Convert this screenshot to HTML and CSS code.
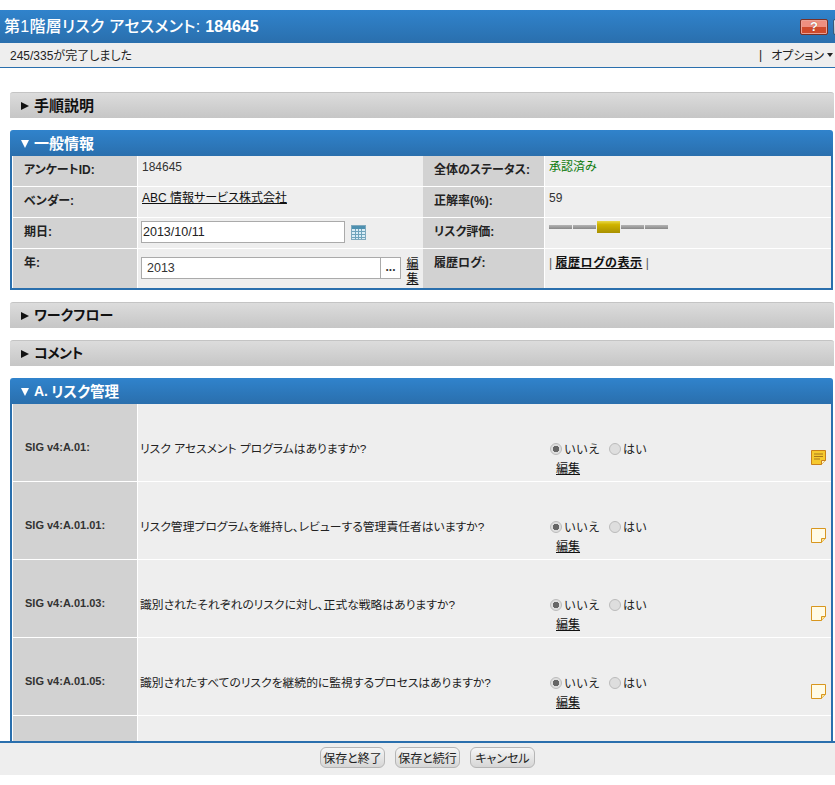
FILE: index.html
```html
<!DOCTYPE html>
<html lang="ja">
<head>
<meta charset="utf-8">
<title>第1階層リスク アセスメント</title>
<link rel="stylesheet" href="styles.css">
</head>
<body>
<div class="page">
  <header class="title-bar">
    <h1 class="title">第1階層リスク アセスメント: <b>184645</b></h1>
    <div class="title-tools">
      <button class="help" aria-label="ヘルプ">?</button>
      <span class="tool-next"></span>
    </div>
  </header>
  <div class="status-bar">
    <span>245/335が完了しました</span>
    <span class="options"><span class="sep">|</span>オプション<span class="caret"></span></span>
  </div>
  <main class="content">
    <section class="panel"><h2 class="head grey"><span class="tri-right"></span>手順説明</h2></section>
    <section class="panel">
      <h2 class="head blue"><span class="tri-down"></span>一般情報</h2>
      <div class="info">
        <div class="label">アンケートID:</div>
        <div class="value">184645</div>
        <div class="label">全体のステータス:</div>
        <div class="value green">承認済み</div>

        <div class="label">ベンダー:</div>
        <div class="value"><a href="#">ABC 情報サービス株式会社</a></div>
        <div class="label">正解率(%):</div>
        <div class="value">59</div>

        <div class="label">期日:</div>
        <div class="value date-cell">
          <input class="text date" value="2013/10/11">
          <svg class="cal" width="15" height="15" viewBox="0 0 15 15"><rect x="0.500" y="0.500" width="14" height="14" fill="#d9ecf5" stroke="#7fa9bd"/><rect x="1" y="1" width="13" height="3" fill="#4d90b0"/><path d="M1 6.500h13M1 9.500h13M1 12.500h13M4.500 4v10M7.500 4v10M10.500 4v10" stroke="#6ea3bb" stroke-width="1" fill="none"/></svg>
        </div>
        <div class="label">リスク評価:</div>
        <div class="value meter-cell">
          <div class="meter">
            <span class="seg"></span><span class="seg"></span><span class="seg on"></span><span class="seg"></span><span class="seg"></span>
          </div>
        </div>

        <div class="label last">年:</div>
        <div class="value year-cell last">
          <div class="year-box"><span class="year-val">2013</span><span class="year-btn">...</span></div>
          <a class="edit-v" href="#">編集</a>
        </div>
        <div class="label last">履歴ログ:</div>
        <div class="value last log"><span class="pipe">|</span> <a href="#">履歴ログの表示</a> <span class="pipe">|</span></div>
      </div>
    </section>
    <section class="panel"><h2 class="head grey"><span class="tri-right"></span><span class="kana">ワークフロー</span></h2></section>
    <section class="panel"><h2 class="head grey"><span class="tri-right"></span><span class="kana tight">コメント</span></h2></section>
    <section class="panel">
      <h2 class="head blue"><span class="tri-down"></span><b class="latin">A.</b><span class="kana-mix">リスク管理</span></h2>
      <div class="q-list">
        <div class="q">
          <div class="q-id">SIG v4:A.01:</div>
          <div class="q-text">リスク アセスメント プログラムはありますか?</div>
          <div class="q-ans">
            <div class="radios"><span class="radio on"></span><span class="opt">いいえ</span><span class="radio"></span><span class="opt">はい</span></div>
            <a href="#">編集</a>
          </div>
          <svg class="note" width="15" height="15" viewBox="0 0 15 15"><path d="M0.500 0.500H14.500V10.500L10.500 14.500H0.500Z" fill="#f6c92e" stroke="#c9801a"/><path d="M3 4h9M3 6.500h9M3 9h6" stroke="#a8761c"/><path d="M10.500 14.500V10.500H14.500" fill="#fff3c0" stroke="#c9801a"/></svg>
        </div>
        <div class="q">
          <div class="q-id">SIG v4:A.01.01:</div>
          <div class="q-text">リスク管理プログラムを維持し、レビューする管理責任者はいますか?</div>
          <div class="q-ans">
            <div class="radios"><span class="radio on"></span><span class="opt">いいえ</span><span class="radio"></span><span class="opt">はい</span></div>
            <a href="#">編集</a>
          </div>
          <svg class="note" width="15" height="15" viewBox="0 0 15 15"><path d="M0.500 0.500H14.500V10.500L10.500 14.500H0.500Z" fill="#fffbe6" stroke="#d8961e"/><path d="M10.500 14.500V10.500H14.500" fill="#f8e49a" stroke="#d8961e"/></svg>
        </div>
        <div class="q">
          <div class="q-id">SIG v4:A.01.03:</div>
          <div class="q-text">識別されたそれぞれのリスクに対し、正式な戦略はありますか?</div>
          <div class="q-ans">
            <div class="radios"><span class="radio on"></span><span class="opt">いいえ</span><span class="radio"></span><span class="opt">はい</span></div>
            <a href="#">編集</a>
          </div>
          <svg class="note" width="15" height="15" viewBox="0 0 15 15"><path d="M0.500 0.500H14.500V10.500L10.500 14.500H0.500Z" fill="#fffbe6" stroke="#d8961e"/><path d="M10.500 14.500V10.500H14.500" fill="#f8e49a" stroke="#d8961e"/></svg>
        </div>
        <div class="q">
          <div class="q-id">SIG v4:A.01.05:</div>
          <div class="q-text">識別されたすべてのリスクを継続的に監視するプロセスはありますか?</div>
          <div class="q-ans">
            <div class="radios"><span class="radio on"></span><span class="opt">いいえ</span><span class="radio"></span><span class="opt">はい</span></div>
            <a href="#">編集</a>
          </div>
          <svg class="note" width="15" height="15" viewBox="0 0 15 15"><path d="M0.500 0.500H14.500V10.500L10.500 14.500H0.500Z" fill="#fffbe6" stroke="#d8961e"/><path d="M10.500 14.500V10.500H14.500" fill="#f8e49a" stroke="#d8961e"/></svg>
        </div>
        <div class="q"><div class="q-id"></div></div>
      </div>
    </section>
  </main>
  <footer class="actions">
    <button class="btn">保存と終了</button>
    <button class="btn">保存と続行</button>
    <button class="btn">キャンセル</button>
  </footer>
</div>
</body>
</html>
```
FILE: styles.css
```css
* { box-sizing: border-box; }
html, body { margin: 0; height: 100%; overflow: hidden; background: #fff; }
body {
  font-family: "Liberation Sans", "Noto Sans CJK JP", sans-serif;
  font-size: 12px;
  font-feature-settings: "palt";
  color: #222;
}
a { color: #111; }
.page { padding-top: 10px; width: 835px; height: 775px; display: flex; flex-direction: column; overflow: hidden; }

.title-bar {
  height: 33px;
  flex: none;
  display: flex;
  align-items: center;
  justify-content: space-between;
  padding: 0 0 0 4px;
  background: linear-gradient(#3083cc, #2a6fad);
}
.title { margin: 0 0 3px; font-size: 16px; font-weight: 500; letter-spacing: 0.280px; color: #fff; white-space: nowrap; }
.title b { font-weight: 700; letter-spacing: 0; }
.title-tools { display: flex; gap: 5px; width: 35px; overflow: hidden; flex: none; margin-top: 1px; }
.help {
  width: 28px;
  height: 16px;
  flex: none;
  padding: 0;
  border: 1px solid #7a3025;
  border-radius: 2px;
  background: linear-gradient(#ee8f80 0 50%, #cf4a2c 50%);
  color: #fff;
  font: 700 13px/14px "Liberation Sans", sans-serif;
  text-shadow: 0 0 1px #7a3025;
  box-shadow: inset 0 0 0 1px #eaa094;
}
.tool-next {
  width: 28px;
  height: 16px;
  flex: none;
  border: 1px solid #3b5a78;
  border-radius: 2px;
  background: linear-gradient(#dfe6ee, #a9b8c8);
}

.status-bar {
  height: 25px;
  flex: none;
  display: flex;
  align-items: center;
  justify-content: space-between;
  padding: 0 0 1px 10px;
  background: #eeeeee;
  border-bottom: 1px solid #2a6fad;
  color: #222;
}
.options { display: flex; align-items: center; }
.sep { margin-right: 9px; }
.caret {
  width: 0; height: 0;
  margin: 1px 2px 0 3px;
  border-left: 3.500px solid transparent;
  border-right: 3.500px solid transparent;
  border-top: 4px solid #222;
}

.content {
  flex: 1;
  min-height: 0;
  overflow: hidden;
  padding: 24px 1px 0 10px;
  display: flex;
  flex-direction: column;
  gap: 12px;
}
.panel { flex: none; }
.head {
  margin: 0;
  height: 26px;
  display: flex;
  align-items: center;
  padding: 0 0 3px 11px;
  font-size: 15px;
  font-weight: 700;
  border-radius: 3px 3px 0 0;
}
.grey { background: linear-gradient(#dcdcdc, #c6c6c6); color: #111; border-top: 1px solid #c4c4c4; }
.blue { background: linear-gradient(#3083cc, #2a6fad); color: #fff; margin-right: 1px; padding-bottom: 1px; }
.kana { font-size: 14px; }
.tight { letter-spacing: -0.500px; }
.kana-mix { font-size: 14.500px; }
.tri-right {
  width: 0; height: 0;
  margin: 3px 5px 0 0;
  border-left: 8px solid #111;
  border-top: 4px solid transparent;
  border-bottom: 4px solid transparent;
}
.tri-down {
  width: 0; height: 0;
  margin: 3px 5px 0 0;
  border-top: 8px solid #fff;
  border-left: 4px solid transparent;
  border-right: 4px solid transparent;
}
.latin { margin-right: 3px; font-size: 14px; }

.info {
  margin-right: 1px;
  display: grid;
  grid-template-columns: 125px 285px 122px 1fr;
  grid-template-rows: 31px 31px 31px 39px;
  border: solid #2a6fad;
  border-width: 0 2px 2px 2px;
  background: #fff;
  padding-left: 1px;
}
.label {
  background: #d2d2d2;
  border-bottom: 1px solid #fff;
  border-right: 1px solid #fff;
  padding: 6px 0 0 11px;
  font-weight: 700;
  color: #222;
  line-height: 16px;
}
.value {
  background: #eeeeee;
  border-bottom: 1px solid #fff;
  padding: 3px 4px 0;
  line-height: 16px;
  color: #333;
  min-width: 0;
}
.last { border-bottom: 0; }
.green { color: #0c7a0c; }
.date-cell { display: flex; align-items: flex-start; padding-left: 3px; }
.text { font: 12.500px "Liberation Sans", sans-serif; color: #222; height: 22px; border: 1px solid #aaa; padding: 0 1px; background: #fff; }
.date { width: 204px; }
.cal { margin: 4px 0 0 6px; flex: none; }
.meter { display: flex; gap: 1px; align-items: flex-start; }
.seg { width: 23px; height: 4px; background: linear-gradient(#b4b4b4, #888); margin: 4px 0 0; }
.seg.on { height: 12px; margin-top: 0; background: linear-gradient(#e8d84a, #d0b400 30%, #a89000); }
.year-cell { display: flex; align-items: flex-start; padding: 8px 0 0 3px; }
.year-box { width: 260px; height: 22px; display: flex; border: 1px solid #aaa; background: #fff; flex: none; }
.year-val { flex: 1; padding: 2px 5px; line-height: 16px; font-size: 12.500px; }
.year-btn { width: 20px; border-left: 1px solid #aaa; text-align: center; font-weight: 700; line-height: 18px; }
.edit-v { width: 13px; margin-left: 5px; line-height: 15px; text-align: center; word-break: break-all; }
.log { padding-top: 6px; }
.log a { font-weight: 700; letter-spacing: 0.500px; }
.pipe { color: #555; }

.q-list {
  margin-right: 1px;
  border-left: 2px solid #2a6fad;
  border-right: 2px solid #2a6fad;
  background: #fff;
  padding-left: 1px;
}
.q { height: 78px; display: flex; align-items: center; border-bottom: 1px solid #fff; background: #eeeeee; }
.q-id {
  width: 125px;
  height: 100%;
  flex: none;
  background: #d2d2d2;
  border-right: 1px solid #fff;
  display: flex;
  align-items: center;
  padding: 9px 0 0 12px;
  font-weight: 700;
  font-size: 11px;
  color: #333;
}
.q-text { width: 413px; flex: none; padding: 9px 0 0 2px; font-size: 11.800px; color: #222; }
.q-ans { width: 260px; flex: none; padding-top: 32px; line-height: 19px; }
.q-ans a { margin-left: 5px; }
.radios { display: flex; align-items: center; }
.opt { font-feature-settings: normal; margin-top: 2px; }
.radio {
  width: 12px; height: 12px;
  margin: 0 2px 0 9px;
  border-radius: 50%;
  border: 1px solid #bbb;
  background: #dedede;
  flex: none;
}
.radio:first-child { margin-left: -1px; }
.radio.on { background: radial-gradient(circle, #666 0 3px, #dedede 3.500px); }
.note { flex: none; margin-top: 30px; }

.actions {
  flex: none;
  height: 34px;
  background: #eeeeee;
  border-top: 2px solid #2a6fad;
  display: flex;
  align-items: flex-start;
  justify-content: center;
  gap: 10px;
  padding: 4px 0 0 20px;
}
.btn {
  width: 65px;
  height: 21px;
  padding: 0;
  border: 1px solid #b5b5b5;
  border-radius: 6px;
  background: linear-gradient(#f6f6f6, #d6d6d6);
  font: 12px "Liberation Sans", "Noto Sans CJK JP", sans-serif;
  font-feature-settings: "palt";
  color: #222;
}
```
